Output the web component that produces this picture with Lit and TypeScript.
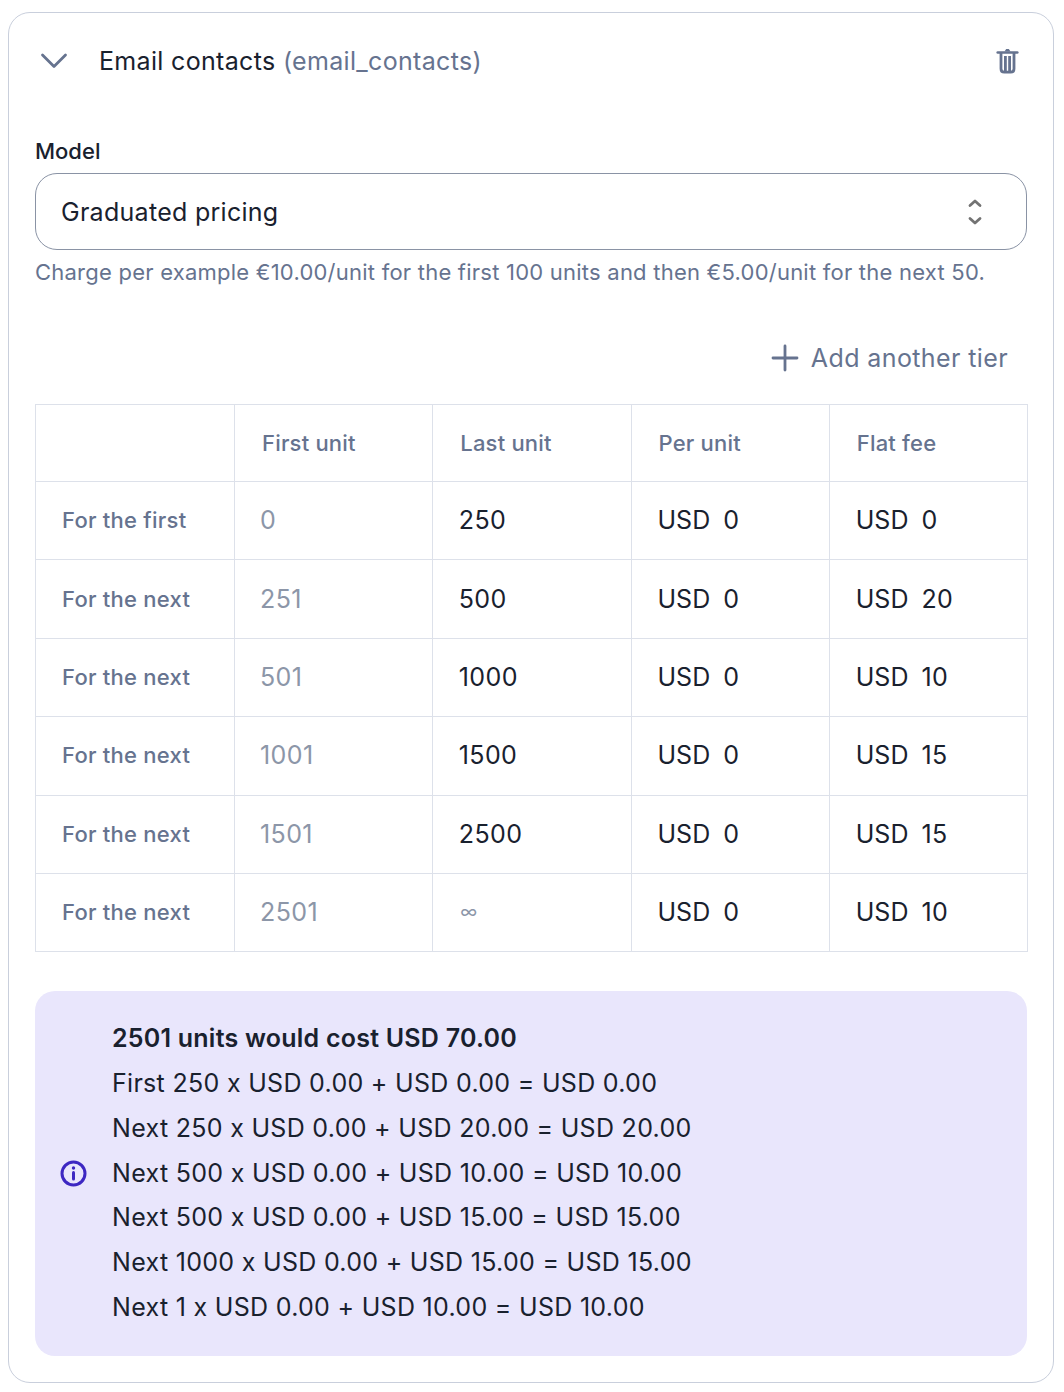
import { LitElement, html, css } from "lit";
import { customElement } from "lit/decorators.js";

const rows = [
  ["For the first", "0", "250", "0", "0"],
  ["For the next", "251", "500", "0", "20"],
  ["For the next", "501", "1000", "0", "10"],
  ["For the next", "1001", "1500", "0", "15"],
  ["For the next", "1501", "2500", "0", "15"],
  ["For the next", "2501", "∞", "0", "10"],
];
const lines = [
  "First 250 x USD 0.00 + USD 0.00 = USD 0.00",
  "Next 250 x USD 0.00 + USD 20.00 = USD 20.00",
  "Next 500 x USD 0.00 + USD 10.00 = USD 10.00",
  "Next 500 x USD 0.00 + USD 15.00 = USD 15.00",
  "Next 1000 x USD 0.00 + USD 15.00 = USD 15.00",
  "Next 1 x USD 0.00 + USD 10.00 = USD 10.00",
];

@customElement("app-root")
export class AppRoot extends LitElement {
  static styles = css`
    :host { display: block; width: 1064px; height: 1392px; background: #fff; font-family: Inter, sans-serif; font-optical-sizing: none; color: #19212e; box-sizing: border-box; padding: 12px 10px 9px 8px; }
    * { box-sizing: border-box; }
    .card { height: 1371px; border: 1px solid #c9cfdc; border-radius: 22px; padding: 0 26px 26px; display: flex; flex-direction: column; }
    .head { height: 96px; display: flex; align-items: center; flex: none; }
    .chev { width: 28px; height: 18px; margin-left: 5px; margin-right: 31px; flex: none; }
    .title { font-size: 25px; line-height: 32px; flex: 1; letter-spacing: 0.33px; }
    .title span { color: #66738f; }
    .trash { width: 24px; height: 28px; margin-right: 7px; }
    .label { font-size: 22px; font-weight: 500; line-height: 28px; margin-top: 28px; }
    .select { height: 77px; margin-top: 8px; border: 1px solid #8a93a5; border-radius: 22px; display: flex; align-items: center; padding: 0 43px 0 25px; font-size: 25px; letter-spacing: 0.28px; justify-content: space-between; }
    .select svg { width: 16px; height: 30px; }
    .help { font-size: 22px; line-height: 28px; color: #66738f; margin-top: 8px; white-space: nowrap; letter-spacing: 0.23px; }
    .add { display: flex; justify-content: flex-end; align-items: center; gap: 12px; margin-top: 56px; height: 32px; padding-right: 19px; font-size: 25px; color: #66738f; letter-spacing: 0.39px; }
    .add svg { width: 28px; height: 28px; }
    table { border-collapse: collapse; table-layout: fixed; width: 993px; margin-top: 30px; }
    td, th { border: 1px solid #dde1ea; padding: 0 26px 1px; text-align: left; font-size: 22px; font-weight: 500; color: #66738f; height: 78.4px; white-space: nowrap; letter-spacing: 0.25px; }
    th { height: 77px; padding: 0 26px 0 27px; letter-spacing: 0.2px; }
    th:first-child { width: 199px; }
    .c { font-size: 25px; font-weight: 400; color: #19212e; letter-spacing: 0.3px; }
    .dis { font-size: 25px; font-weight: 400; color: #8c96a8; padding-left: 25px; letter-spacing: 0.4px; }
    .num { padding-left: 25.5px; letter-spacing: 0.4px; }
    .inf { font-size: 18px; font-weight: 400; color: #8c96a8; padding-left: 27px; padding-bottom: 3px; }
    .cur { margin-right: 13px; letter-spacing: 0; }
    .info { margin-top: auto; height: 365px; background: #e9e6fc; border-radius: 20px; display: flex; align-items: center; padding: 0 0 1px 25px; gap: 25px; font-size: 25px; letter-spacing: 0.3px; }
    .info svg { width: 27px; height: 27px; flex: none; }
    .info div div { line-height: 44.8px; white-space: nowrap; }
    .b { font-weight: 600; letter-spacing: 0.23px; }
  `;
  render() {
    return html`<div class="card">
      <div class="head">
        <svg class="chev" viewBox="0 0 28 18" fill="none" stroke="#66738f" stroke-width="2.8" stroke-linecap="round" stroke-linejoin="round"><path d="M2.5 3l11.5 11.5L25.5 3"/></svg>
        <div class="title">Email contacts <span>(email_contacts)</span></div>
        <svg class="trash" viewBox="0 0 24 28" fill="#66738f"><path d="M1.7 4.2h19.6a1.1 1.1 0 0 1 0 2.6H1.7a1.1 1.1 0 0 1 0-2.6z"/><path d="M8.5 4.6l1.7-2.6h2.6l1.7 2.6z"/><path fill="none" stroke="#66738f" stroke-width="2.8" d="M5 6v15.7c0 2.4 1 3.5 3.3 3.5h6.4c2.3 0 3.3-1.1 3.3-3.5V6M9.4 9v15M13.6 9v15"/></svg>
      </div>
      <div class="label">Model</div>
      <div class="select">Graduated pricing
        <svg viewBox="0 0 16 30" fill="none" stroke="#737373" stroke-width="2.8" stroke-linecap="round" stroke-linejoin="round"><path d="M3 8.5L8 4l5 4.5M3 21.5L8 26l5-4.5"/></svg>
      </div>
      <div class="help">Charge per example €10.00/unit for the first 100 units and then €5.00/unit for the next 50.</div>
      <div class="add">
        <svg viewBox="0 0 28 28" fill="none" stroke="#66738f" stroke-width="2.8" stroke-linecap="round"><path d="M14 2v24M2 14h24"/></svg>
        Add another tier
      </div>
      <table>
        <tr><th></th><th>First unit</th><th>Last unit</th><th>Per unit</th><th>Flat fee</th></tr>
        ${rows.map((r) => html`<tr>
          <td>${r[0]}</td>
          <td class="dis">${r[1]}</td>
          <td class=${r[2] === "∞" ? "inf" : "c num"}>${r[2]}</td>
          <td class="c"><span class="cur">USD</span>${r[3]}</td>
          <td class="c"><span class="cur">USD</span>${r[4]}</td>
        </tr>`)}
      </table>
      <div class="info">
        <svg viewBox="0 0 27 27" fill="none" stroke="#3d27c2" stroke-width="3" stroke-linecap="round"><circle cx="13.5" cy="13.5" r="11.5"/><path d="M13.5 12.5v6.5"/><path d="M13.5 8v.1" stroke-width="3.4"/></svg>
        <div>
          <div class="b">2501 units would cost USD 70.00</div>
          ${lines.map((l) => html`<div>${l}</div>`)}
        </div>
      </div>
    </div>`;
  }
}
